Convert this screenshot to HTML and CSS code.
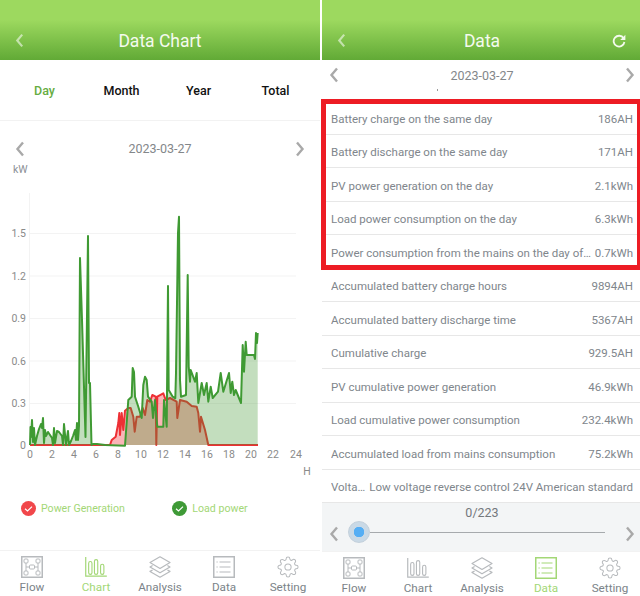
FILE: index.html
```html
<!DOCTYPE html>
<html lang="en">
<head>
    <meta charset="UTF-8">
    <meta name="viewport" content="width=device-width, initial-scale=1.0">
    <title>Data Chart</title>
    <link rel="stylesheet" href="styles.css">
</head>
<body>
    <svg class="icon-defs" width="0" height="0">
        <symbol id="i-back" viewBox="0 0 10 16"><path d="M8 1.5 2.5 8 8 14.5" fill="none" stroke="currentColor" stroke-width="2.4"/></symbol>
        <symbol id="i-next" viewBox="0 0 10 16"><path d="M2 1.5 7.5 8 2 14.5" fill="none" stroke="currentColor" stroke-width="2.4"/></symbol>
        <symbol id="i-prev" viewBox="0 0 10 16"><path d="M8 1.5 2.5 8 8 14.5" fill="none" stroke="currentColor" stroke-width="2.4"/></symbol>
        <symbol id="i-flow" viewBox="0 0 22 22">
            <g fill="none" stroke="currentColor" stroke-width="1">
                <rect x=".75" y=".75" width="20.5" height="20.5" stroke-width="1.5"/>
                <rect x="3" y="3" width="4" height="4" rx="1"/><rect x="15" y="3" width="4" height="4" rx="1"/>
                <rect x="3" y="15" width="4" height="4" rx="1"/><rect x="15" y="15" width="4" height="4" rx="1"/>
                <rect x="8.5" y="9" width="5" height="4" rx="1"/>
                <path d="M5 7v8M17 7v8M5 11h3.5M13.5 11H17"/>
            </g>
        </symbol>
        <symbol id="i-chart" viewBox="0 0 24 22">
            <g fill="none" stroke="currentColor" stroke-width="1.2">
                <path d="M.8 0v21h23" stroke-width="1.3"/>
                <rect x="4" y="5" width="3.6" height="14" rx="1.8"/>
                <rect x="10.3" y="3" width="3.6" height="16" rx="1.8"/>
                <rect x="17" y="8" width="3.6" height="11" rx="1.8"/>
            </g>
        </symbol>
        <symbol id="i-layers" viewBox="0 0 22 22">
            <g fill="none" stroke="currentColor" stroke-width="1.2" stroke-linejoin="round">
                <path d="M11 .8 21 6.6 11 12.4 1 6.6z"/>
                <path d="M3.6 9.5 1 11l10 5.8L21 11l-2.6-1.5"/>
                <path d="M3.6 14 1 15.4l10 5.8 10-5.8L18.4 14"/>
            </g>
        </symbol>
        <symbol id="i-list" viewBox="0 0 22 22">
            <g fill="none" stroke="currentColor">
                <rect x=".75" y=".75" width="20.5" height="20.5" stroke-width="1.5"/>
                <path d="M6.5 6h11M6.5 11h11M6.5 16h11" stroke-width="1.2"/>
                <path d="M3.5 6h1.2M3.5 11h1.2M3.5 16h1.2" stroke-width="1.2"/>
            </g>
        </symbol>
        <symbol id="i-gear" viewBox="0 0 24 24">
            <g fill="none" stroke="currentColor" stroke-width="1.1">
                <circle cx="12" cy="12" r="3.4"/>
                <path d="M19.4 15a1.65 1.65 0 0 0 .33 1.82l.06.06a2 2 0 0 1 0 2.83 2 2 0 0 1-2.83 0l-.06-.06a1.65 1.65 0 0 0-1.82-.33 1.65 1.65 0 0 0-1 1.51V21a2 2 0 0 1-2 2 2 2 0 0 1-2-2v-.09A1.65 1.65 0 0 0 9 19.4a1.65 1.65 0 0 0-1.82.33l-.06.06a2 2 0 0 1-2.83 0 2 2 0 0 1 0-2.83l.06-.06a1.65 1.65 0 0 0 .33-1.82 1.65 1.65 0 0 0-1.51-1H3a2 2 0 0 1-2-2 2 2 0 0 1 2-2h.09A1.65 1.65 0 0 0 4.6 9a1.65 1.65 0 0 0-.33-1.82l-.06-.06a2 2 0 0 1 0-2.83 2 2 0 0 1 2.83 0l.06.06a1.65 1.65 0 0 0 1.82.33H9a1.65 1.65 0 0 0 1-1.51V3a2 2 0 0 1 2-2 2 2 0 0 1 2 2v.09a1.65 1.65 0 0 0 1 1.51 1.65 1.65 0 0 0 1.82-.33l.06-.06a2 2 0 0 1 2.83 0 2 2 0 0 1 0 2.83l-.06.06a1.65 1.65 0 0 0-.33 1.82V9a1.65 1.65 0 0 0 1.51 1H21a2 2 0 0 1 2 2 2 2 0 0 1-2 2h-.09a1.65 1.65 0 0 0-1.51 1z"/>
            </g>
        </symbol>
    </svg>

    <div class="app-container">
        <!-- Chart screen -->
        <div class="screen">
            <div class="header">
                <svg class="header-back"><use href="#i-back"/></svg>
                <h1>Data Chart</h1>
            </div>
            <div class="period-tabs">
                <span class="period-tab active">Day</span>
                <span class="period-tab">Month</span>
                <span class="period-tab">Year</span>
                <span class="period-tab">Total</span>
            </div>
            <div class="date-row date-row-chart">
                <svg class="chevron"><use href="#i-prev"/></svg>
                <span class="date-text">2023-03-27</span>
                <svg class="chevron"><use href="#i-next"/></svg>
            </div>
            <div class="unit-label">kW</div>
            <svg class="chart" width="320" height="305" viewBox="0 175 320 305">
                <g class="grid">
                    <path d="M29.5 193V445.5"/>
                    <path d="M30 233.5H296M30 276H296M30 318.5H296M30 361H296M30 403.5H296"/>
                </g>
                <g class="y-labels">
                    <text x="26" y="237">1.5</text>
                    <text x="26" y="280">1.2</text>
                    <text x="26" y="322">0.9</text>
                    <text x="26" y="365">0.6</text>
                    <text x="26" y="407">0.3</text>
                    <text x="26" y="449">0</text>
                </g>
                <g class="x-labels">
                    <text x="30" y="458">0</text>
                    <text x="52" y="458">2</text>
                    <text x="74" y="458">4</text>
                    <text x="96" y="458">6</text>
                    <text x="118" y="458">8</text>
                    <text x="141" y="458">10</text>
                    <text x="163" y="458">12</text>
                    <text x="185" y="458">14</text>
                    <text x="207" y="458">16</text>
                    <text x="229" y="458">18</text>
                    <text x="251" y="458">20</text>
                    <text x="273" y="458">22</text>
                    <text x="296" y="458">24</text>
                    <text x="307" y="475">H</text>
                </g>
                <!-- power generation -->
                <polyline class="series-red" points="30,445 110,445 111.7,440 115.7,436.7 118.3,423 119.3,413 120,435 121.7,413 123.3,430 125,410.7 128.3,408 130.7,408 133.3,416.7 134.7,431.7 136.7,416.7 140,416.7 142.7,408 145,415 147.3,400 150,401.7 152.3,395 155.7,396.7 156.3,445 157.3,396.7 163.3,393.3 165.7,400 170,398 176.7,401.7 177.3,418 180,400 186.7,401.7 191.7,406 196.7,406.7 198.3,413 200,431.7 201,416.7 205,430 208.3,445 258,445"/>
                <!-- load power -->
                <polygon class="area-green" points="30,445 30.5,427 31,437 32,420 33,442 34,428 35,445 37,436 39,429 41,424 42,428 43,418 44,443 45,430 46,436 48,432 50,435 52,438 53,445 54,428 55,443 57,431 59,432 62,436 63,445 64,424 66,445 68,431 69,445 71,441 73,436 75,430 76,440 77,423 78,440 79,426 80,258 82,320 85.5,437 88,236 89,383 90,383 91.5,445 93,444 97,444 105,445 125,445.7 128.3,400 131.7,396.7 132.7,368 134,372 135,396.7 138.3,406.7 141.7,418 143.3,385 145,376.7 146.7,380 148,396.7 151.7,401.7 153,418 155,400 157.3,426.7 163.3,426.7 164,400 166.7,426.7 168,286 168.7,390 172.7,396.7 175.3,398.3 176,373 178,233 179,216.7 180,380 181,396.7 186,395 187.7,275 188.7,366.7 190,381.7 190.7,370 195,381.7 196.7,373 198.3,403 201.7,383 204,395 206.7,383 208.3,401.7 210.7,386.7 212.7,398 218,391.7 220.7,373 223.3,391.7 229,373 230.7,393 232.3,381.7 234,395 235.7,390 241,403 242.7,345 244,371.7 245.7,341.7 246.7,355 254,355 255,359 256,333 257,343 257.7,333 257.7,445"/>
                <polyline class="series-green" points="30,445 30.5,427 31,437 32,420 33,442 34,428 35,445 37,436 39,429 41,424 42,428 43,418 44,443 45,430 46,436 48,432 50,435 52,438 53,445 54,428 55,443 57,431 59,432 62,436 63,445 64,424 66,445 68,431 69,445 71,441 73,436 75,430 76,440 77,423 78,440 79,426 80,258 82,320 85.5,437 88,236 89,383 90,383 91.5,445 93,444 97,444 105,445 125,445.7 128.3,400 131.7,396.7 132.7,368 134,372 135,396.7 138.3,406.7 141.7,418 143.3,385 145,376.7 146.7,380 148,396.7 151.7,401.7 153,418 155,400 157.3,426.7 163.3,426.7 164,400 166.7,426.7 168,286 168.7,390 172.7,396.7 175.3,398.3 176,373 178,233 179,216.7 180,380 181,396.7 186,395 187.7,275 188.7,366.7 190,381.7 190.7,370 195,381.7 196.7,373 198.3,403 201.7,383 204,395 206.7,383 208.3,401.7 210.7,386.7 212.7,398 218,391.7 220.7,373 223.3,391.7 229,373 230.7,393 232.3,381.7 234,395 235.7,390 241,403 242.7,345 244,371.7 245.7,341.7 246.7,355 254,355 255,359 256,333 257,343 257.7,333"/>
            </svg>
            <div class="legend">
                <div class="legend-item">
                    <svg class="legend-check check-red" viewBox="0 0 15 15"><circle cx="7.5" cy="7.5" r="7.5"/><path d="M4 7.8 6.5 10 11 5.6"/></svg>
                    <span>Power Generation</span>
                </div>
                <div class="legend-item">
                    <svg class="legend-check check-green" viewBox="0 0 15 15"><circle cx="7.5" cy="7.5" r="7.5"/><path d="M4 7.8 6.5 10 11 5.6"/></svg>
                    <span>Load power</span>
                </div>
            </div>
            <div class="tab-bar">
                <div class="tab"><svg class="tab-icon"><use href="#i-flow"/></svg><span>Flow</span></div>
                <div class="tab active"><svg class="tab-icon"><use href="#i-chart"/></svg><span>Chart</span></div>
                <div class="tab"><svg class="tab-icon"><use href="#i-layers"/></svg><span>Analysis</span></div>
                <div class="tab"><svg class="tab-icon"><use href="#i-list"/></svg><span>Data</span></div>
                <div class="tab"><svg class="tab-icon"><use href="#i-gear"/></svg><span>Setting</span></div>
            </div>
        </div>

        <!-- Data screen -->
        <div class="screen">
            <div class="header">
                <svg class="header-back"><use href="#i-back"/></svg>
                <h1>Data</h1>
                <svg class="header-refresh" viewBox="0 0 14 14"><path d="M11.6 4.2A5.4 5.4 0 1 0 12.4 8" fill="none" stroke="currentColor" stroke-width="1.8"/><path d="M13.4 .8V6H8.2z" fill="currentColor"/></svg>
            </div>
            <div class="date-row date-row-data">
                <svg class="chevron"><use href="#i-prev"/></svg>
                <span class="date-text">2023-03-27</span>
                <svg class="chevron"><use href="#i-next"/></svg>
            </div>
            <div class="data-list">
                <div class="data-row"><span class="data-label">Battery charge on the same day</span><span class="data-value">186AH</span></div>
                <div class="data-row"><span class="data-label">Battery discharge on the same day</span><span class="data-value">171AH</span></div>
                <div class="data-row"><span class="data-label">PV power generation on the day</span><span class="data-value">2.1kWh</span></div>
                <div class="data-row"><span class="data-label">Load power consumption on the day</span><span class="data-value">6.3kWh</span></div>
                <div class="data-row"><span class="data-label">Power consumption from the mains on the day of…</span><span class="data-value">0.7kWh</span></div>
                <div class="data-row"><span class="data-label">Accumulated battery charge hours</span><span class="data-value">9894AH</span></div>
                <div class="data-row"><span class="data-label">Accumulated battery discharge time</span><span class="data-value">5367AH</span></div>
                <div class="data-row"><span class="data-label">Cumulative charge</span><span class="data-value">929.5AH</span></div>
                <div class="data-row"><span class="data-label">PV cumulative power generation</span><span class="data-value">46.9kWh</span></div>
                <div class="data-row"><span class="data-label">Load cumulative power consumption</span><span class="data-value">232.4kWh</span></div>
                <div class="data-row"><span class="data-label">Accumulated load from mains consumption</span><span class="data-value">75.2kWh</span></div>
                <div class="data-row"><span class="data-label">Volta…</span><span class="data-value">Low voltage reverse control 24V American standard</span></div>
                <div class="highlight-box"></div>
            </div>
            <div class="pager">
                <div class="pager-count">0/223</div>
                <div class="pager-slider">
                    <svg class="chevron"><use href="#i-prev"/></svg>
                    <span class="slider-thumb"></span>
                    <span class="slider-track"></span>
                    <svg class="chevron"><use href="#i-next"/></svg>
                </div>
            </div>
            <div class="tab-bar">
                <div class="tab"><svg class="tab-icon"><use href="#i-flow"/></svg><span>Flow</span></div>
                <div class="tab"><svg class="tab-icon"><use href="#i-chart"/></svg><span>Chart</span></div>
                <div class="tab"><svg class="tab-icon"><use href="#i-layers"/></svg><span>Analysis</span></div>
                <div class="tab active"><svg class="tab-icon"><use href="#i-list"/></svg><span>Data</span></div>
                <div class="tab"><svg class="tab-icon"><use href="#i-gear"/></svg><span>Setting</span></div>
            </div>
        </div>
    </div>
</body>
</html>
```

FILE: styles.css
```css
* {
    margin: 0;
    padding: 0;
    box-sizing: border-box;
}

body {
    font-family: Roboto, "Liberation Sans", sans-serif;
    background: #ffffff;
    width: 640px;
    height: 596px;
    overflow: hidden;
}

.icon-defs {
    display: block;
    height: 0;
}

.app-container {
    display: flex;
    gap: 2px;
    width: 642px;
    height: 596px;
}

.screen {
    flex: 0 0 320px;
    min-width: 0;
    display: flex;
    flex-direction: column;
    height: 596px;
}

/* Header */
.header {
    flex: none;
    height: 60px;
    padding-top: 22px;
    display: flex;
    align-items: center;
    justify-content: center;
    position: relative;
    background: linear-gradient(180deg, #9dd95f 0%, #9dd95f 33%, #61aa36 100%);
}

.header h1 {
    font-size: 17.5px;
    font-weight: 400;
    color: #f4faee;
}

.header-back {
    position: absolute;
    left: 15px;
    top: 33px;
    width: 9px;
    height: 15px;
    color: rgba(255, 255, 255, 0.55);
}

.header-refresh {
    position: absolute;
    right: 16px;
    top: 34px;
    width: 14px;
    height: 14px;
    color: #f4faee;
}

/* Period tabs */
.period-tabs {
    flex: none;
    height: 61px;
    display: grid;
    grid-template-columns: repeat(4, 1fr);
    padding: 0 6px;
    align-items: center;
    text-align: center;
    border-bottom: 1px solid #f2f2f2;
}

.period-tab {
    font-size: 12.5px;
    font-weight: 500;
    color: #111111;
}

.period-tab.active {
    color: #67ad42;
}

/* Date row */
.date-row {
    flex: none;
    display: flex;
    align-items: center;
    justify-content: space-between;
}

.date-row-chart {
    height: 55px;
    padding: 0 15px;
    margin-bottom: -14px;
}

.date-row-data {
    height: 30px;
    padding: 0 7px;
    margin-bottom: 11px;
    position: relative;
}

/* stray speck under the date */
.date-row-data::after {
    content: '';
    position: absolute;
    left: 115px;
    top: 29px;
    width: 1px;
    height: 2px;
    background: #9a9a9a;
}

.date-text {
    font-size: 12.5px;
    color: #83878a;
}

.chevron {
    flex: none;
    width: 10px;
    height: 16px;
    color: #a9a9a9;
}

.unit-label {
    flex: none;
    height: 13px;
    padding-left: 13px;
    font-size: 10.5px;
    line-height: 15px;
    color: #8b8f96;
}

/* Chart */
.chart {
    flex: none;
    display: block;
}

.grid path {
    fill: none;
    stroke: #f3f3f3;
    stroke-width: 1;
}

.y-labels text,
.x-labels text {
    font-size: 10.5px;
    fill: #8a8a8a;
}

.y-labels text {
    text-anchor: end;
}

.x-labels text {
    text-anchor: middle;
}

.series-red {
    fill: rgba(240, 50, 55, 0.36);
    stroke: #ee3035;
    stroke-width: 2;
    stroke-linejoin: round;
}

.area-green {
    fill: rgba(62, 150, 45, 0.31);
}

.series-green {
    fill: none;
    stroke: #3f9a33;
    stroke-width: 2;
    stroke-linejoin: round;
}

/* Legend */
.legend {
    flex: none;
    display: flex;
    height: 20px;
    margin-top: 18px;
    padding-left: 21px;
    gap: 47.5px;
}

.legend-item {
    display: flex;
    align-items: center;
    gap: 5px;
    font-size: 10.6px;
    color: #a3d776;
}

.legend-check {
    width: 15px;
    height: 15px;
}

.legend-check path {
    fill: none;
    stroke: #ffffff;
    stroke-width: 1.2;
}

.check-red circle {
    fill: #f1474b;
}

.check-green circle {
    fill: #3f9a37;
}

/* Data list */
.data-list {
    flex: none;
    position: relative;
}

.data-row {
    display: flex;
    align-items: center;
    gap: 3px;
    height: 33.5px;
    padding: 3px 9px 0;
    border-bottom: 1px solid #e7e7e7;
    font-size: 11.5px;
    color: #80868c;
}

.data-row:last-of-type {
    border-bottom: none;
}

.data-label {
    flex: 1;
    min-width: 0;
    white-space: nowrap;
    overflow: hidden;
    text-overflow: ellipsis;
}

.data-value {
    flex: none;
    white-space: nowrap;
}

.highlight-box {
    position: absolute;
    left: -1px;
    top: -2px;
    right: 0;
    height: 171px;
    border: 5px solid #ed1c24;
}

/* Slider footer */
.pager {
    flex: none;
    height: 48px;
    background: #f3f5f6;
}

.pager-count {
    height: 18px;
    padding-top: 2px;
    text-align: center;
    font-size: 12.5px;
    color: #73787c;
}

.pager-slider {
    display: flex;
    align-items: center;
    height: 22px;
    padding: 0 7px;
}

.pager-slider .chevron {
    margin-top: 4px;
}

.slider-thumb {
    flex: none;
    width: 22px;
    height: 22px;
    margin-left: 9px;
    border-radius: 50%;
    background: radial-gradient(circle, #55aef4 0, #55aef4 5px, #c9d9e6 5.5px);
    border: 1px solid #c3d0db;
}

.slider-track {
    flex: 1;
    height: 1px;
    margin-right: 20px;
    background: #a6aaad;
}

/* Bottom tabs */
.tab-bar {
    flex: none;
    margin-top: auto;
    height: 46px;
    display: grid;
    grid-template-columns: repeat(5, 64px);
    border-top: 1px solid #f2f2f2;
}

.tab {
    display: flex;
    flex-direction: column;
    align-items: center;
    padding-top: 5px;
    font-size: 11.7px;
    line-height: 14px;
    color: #7b8388;
}

.tab-icon {
    width: 22px;
    height: 22px;
    margin-bottom: 2px;
    color: #b7babd;
}

.tab.active,
.tab.active .tab-icon {
    color: #a3d776;
}
```
